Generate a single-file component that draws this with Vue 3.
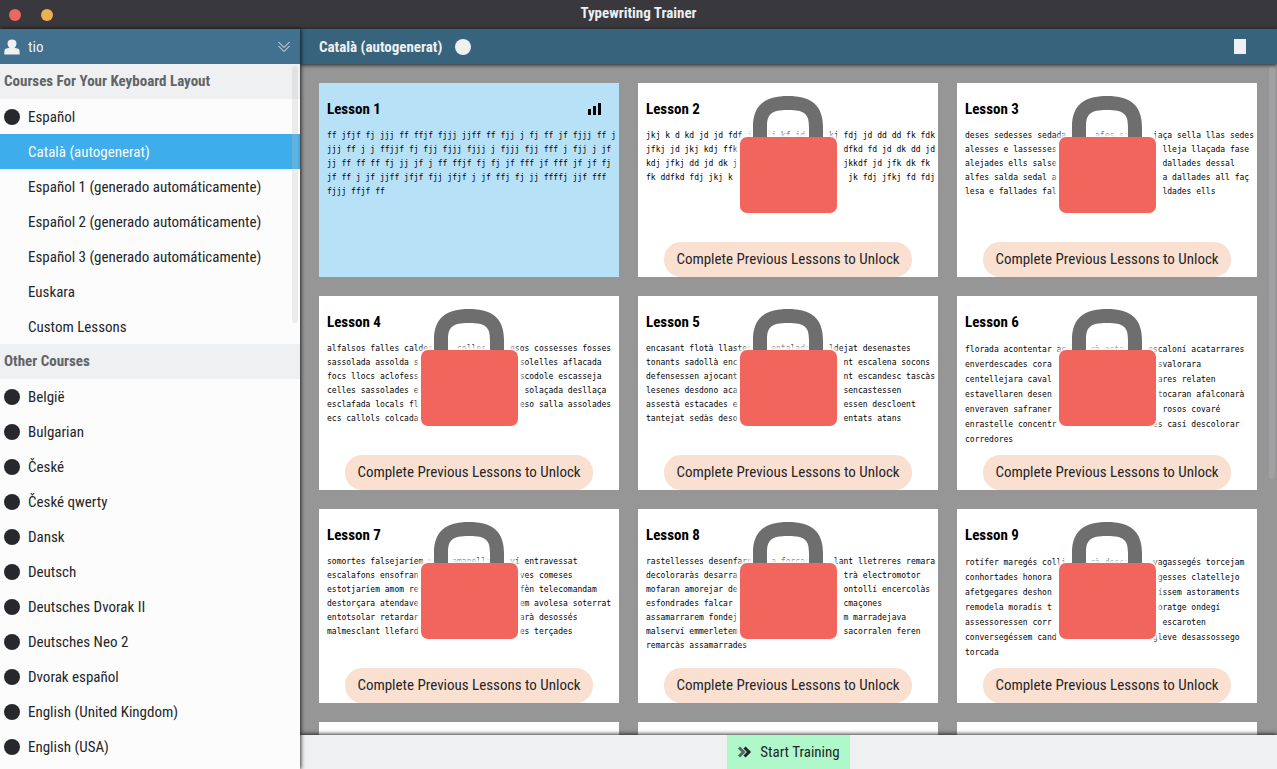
<script setup>
import { ref } from 'vue'

const keyboardCourses = [
  { name: 'Español', dot: true },
  { name: 'Català (autogenerat)' },
  { name: 'Español 1 (generado automáticamente)' },
  { name: 'Español 2 (generado automáticamente)' },
  { name: 'Español 3 (generado automáticamente)' },
  { name: 'Euskara' },
  { name: 'Custom Lessons' },
]
const otherCourses = [
  'België', 'Bulgarian', 'České', 'České qwerty', 'Dansk', 'Deutsch',
  'Deutsches Dvorak II', 'Deutsches Neo 2', 'Dvorak español',
  'English (United Kingdom)', 'English (USA)',
]
const selected = ref('Català (autogenerat)')

// A row is a list of [column, text] pieces placed on the monospace grid.
const row = (...pieces) =>
  pieces.reduce((line, [col, text]) => line.padEnd(col) + text, '')
const split = (left, col, right) => row([0, left], [col, right])

const lessons = [
  {
    title: 'Lesson 1',
    open: true,
    lines: [
      'ff jfjf fj jjj ff ffjf fjjj jjff ff fjj j fj ff jf fjjj ff j',
      'jjj ff j j ffjjf fj fjj fjjj fjjj j fjjj fjj fff j fjj j jf',
      'jj ff ff ff fj jj jf j ff ffjf fj fj jf fff jf fff jf jf fj',
      'jf ff j jf jjff jfjf fjj jfjf j jf ffj fj jj ffffj jjf fff',
      'fjjj ffjf ff',
    ],
  },
  {
    title: 'Lesson 2',
    lines: [
      'jkj k d kd jd jd fdf jk djj kf jd fdd kj fdj jd dd dd fk fdk',
      split('jfkj jd jkj kdj ffk', 41, 'dfkd fd jd dk dd jd'),
      split('kdj jfkj dd jd dk j', 41, 'jkkdf jd jfk dk fk'),
      split('fk ddfkd fdj jkj k', 42, 'jk fdj jfkj fd fdj'),
    ],
  },
  {
    title: 'Lesson 3',
    lines: [
      row([0, 'deses sedesses sedada'], [27, 'afes sa'], [39, 'jaça sella llas sedes']),
      split('alesses e lassesses', 41, 'lleja llaçada fase'),
      split('alejades ells salse', 41, 'dallades dessal'),
      split('alfes salda sedal a', 41, 'a dallades all faç'),
      split('lesa e fallades fal', 41, 'ldades ells'),
    ],
  },
  {
    title: 'Lesson 4',
    lines: [
      row([0, 'alfalsos falles caldes'], [27, 'colles'], [38, 'esos cossesses fosses']),
      split('sassolada assolda s', 40, 'solelles aflacada'),
      split('focs llocs aclofess', 40, 'scodole escasseja'),
      split('celles sassolades e', 41, 'solaçada desllaça'),
      split('esclafada locals fl', 40, 'eso salla assolades'),
      'ecs callols colcada',
    ],
  },
  {
    title: 'Lesson 5',
    lines: [
      row([0, 'encasant flotà llastes'], [26, 'entalada'], [38, 'ldejat desenastes']),
      split('tonants sadollà enc', 41, 'nt escalena socons'),
      split('defensessen ajocant', 41, 'nt escandesc tascàs'),
      split('lesenes desdono aca', 41, 'sencastessen'),
      split('assestà estacades e', 41, 'essen descloent'),
      split('tantejat sedàs deso', 41, 'entats atans'),
    ],
  },
  {
    title: 'Lesson 6',
    loose: true,
    lines: [
      row([0, 'florada acontentar ac'], [26, 'rà estar'], [38, 'escaloní acatarrares']),
      split('enverdescades cora', 40, 'svalorara'),
      split('centellejara caval', 40, 'ares relaten'),
      split('estavellaren desen', 40, 'tocaran afalconarà'),
      split('enveraven safraner', 41, 'rosos covaré'),
      split('enrastelle concentr', 39, 'es casí descolorar'),
      'corredores',
    ],
  },
  {
    title: 'Lesson 7',
    lines: [
      row([0, 'somortes falsejaríem v'], [26, 'amanella'], [38, 'ví entravessat']),
      split('escalafons ensofran', 40, 'ves comeses'),
      split('estotjaríem amom re', 40, 'fèn telecomandam'),
      split('destorçara atendave', 40, 'em avolesa soterrat'),
      split('entotsolar retardar', 40, 'arà desossés'),
      split('malmesclant llefard', 40, 'es terçades'),
    ],
  },
  {
    title: 'Lesson 8',
    lines: [
      row([0, 'rastellesses desenfarn'], [26, 'a forcar'], [39, 'lant lletreres remara']),
      split('decoloraràs desarra', 41, 'trà electromotor'),
      split('mofaran amorejar de', 41, 'ontollí encercolàs'),
      split('esfondrades falcar', 41, 'cmaçones'),
      split('assamarrarem fondej', 41, 'm marradejava'),
      split('malserví emmerletem', 41, 'sacorralen feren'),
      'remarcàs assamarrades',
    ],
  },
  {
    title: 'Lesson 9',
    loose: true,
    lines: [
      row([0, 'rotífer maregés colli'], [26, 'rà desca'], [39, 'vagassegés torcejam']),
      split('conhortades honora', 40, 'gesses clatellejo'),
      split('afetgegares deshon', 40, 'íssem astoraments'),
      split('remodela moradís t', 40, 'oratge ondegí'),
      split('assessoressen corr', 41, 'escaroten'),
      split('conversegéssem cand', 39, 'gleve desassossego'),
      'torcada',
    ],
  },
]
</script>

<template>
  <div class="window">
    <header class="titlebar">
      <div class="lights">
        <button class="light close" aria-label="Close"></button>
        <button class="light minimize" aria-label="Minimize"></button>
      </div>
      <h1 class="title">Typewriting Trainer</h1>
    </header>

    <div class="body">
      <aside class="sidebar">
        <button class="profile">
          <svg class="user-icon" viewBox="0 0 16 16" aria-hidden="true">
            <path d="M8 .5C5.300.5 3.500 2 3.500 4.600c0 1.900.8 3.200 1.900 4.100C4.500 9.300 2.800 9.200 1.700 9.800.6 10.400.3 11.500.3 15.500h15.400c0-4-.3-5.100-1.400-5.700-1.100-.6-2.800-.5-3.700-1.100 1.100-.9 1.900-2.200 1.900-4.100C12.500 2 10.700.5 8 .5z" />
          </svg>
          <span class="profile-name">tio</span>
          <svg class="chevrons" viewBox="0 0 12 12" aria-hidden="true">
            <path d="M.5 1 6 6.500 11.500 1M.5 5 6 10.500 11.500 5" />
          </svg>
        </button>

        <nav class="courses">
          <h2 class="section">Courses For Your Keyboard Layout</h2>
          <button
            v-for="c in keyboardCourses"
            :key="c.name"
            class="course"
            :class="{ active: c.name === selected }"
            @click="selected = c.name"
          >
            <span class="dot" :class="{ blank: !c.dot }"></span>{{ c.name }}
          </button>
          <h2 class="section">Other Courses</h2>
          <button v-for="name in otherCourses" :key="name" class="course" @click="selected = name">
            <span class="dot"></span>{{ name }}
          </button>
          <div class="scroll side-scroll"></div>
        </nav>
      </aside>

      <main class="main">
        <div class="toolbar">
          <h2 class="course-title">Català (autogenerat)</h2>
          <button class="tool-dot" aria-label="Course information"></button>
          <button class="tool-box" aria-label="Configure"></button>
        </div>

        <div class="lessons">
          <div class="grid">
            <article v-for="l in lessons" :key="l.title" class="card" :class="{ open: l.open }">
              <div class="card-head">
                <h3 class="card-title">{{ l.title }}</h3>
                <button v-if="l.open" class="stats" aria-label="Statistics">
                  <svg viewBox="0 0 14 12" aria-hidden="true">
                    <path d="M0 6h3v6H0zM5 3h3v9H5zM10 0h3v12h-3z" />
                  </svg>
                </button>
              </div>
              <pre class="sample" :class="{ loose: l.loose }">{{ l.lines.join('\n') }}</pre>
              <template v-if="!l.open">
                <svg class="lock" viewBox="0 0 98 118" aria-hidden="true">
                  <path class="shackle" d="M14 42V32C14 10 26 1 49 1s35 9 35 31v10H70V32C70 19 66 15 49 15S28 19 28 32v10z" />
                  <rect class="lock-body" x="1" y="42" width="97" height="76" rx="7" />
                </svg>
                <p class="unlock">Complete Previous Lessons to Unlock</p>
              </template>
            </article>
            <article v-for="n in 3" :key="n" class="card"></article>
          </div>
          <div class="scroll main-scroll"></div>
        </div>

        <footer class="footer">
          <button class="start">
            <svg class="start-icon" viewBox="0 0 14 12" aria-hidden="true">
              <path class="back" d="M1.500 1.500 6 6l-4.500 4.500" />
              <path class="front" d="M7 1.500 11.500 6 7 10.500" />
            </svg>
            Start Training
          </button>
        </footer>
      </main>
    </div>
  </div>
</template>

<style>
body {
  margin: 0;
}
</style>

<style scoped>
.window {
  display: flex;
  flex-direction: column;
  height: 100vh;
  overflow: hidden;
  font-family: "Ubuntu Condensed", "Roboto Condensed", "Roboto", sans-serif;
  font-size: 15px;
  color: #232629;
  background: #969696;
}
h1, h2, h3, p, pre {
  margin: 0;
}
h1, h2, h3 {
  font-size: 15px;
  font-weight: 700;
}
button {
  border: 0;
  padding: 0;
  background: none;
  font: inherit;
  color: inherit;
}
.titlebar {
  position: relative;
  display: flex;
  align-items: center;
  justify-content: center;
  flex: none;
  height: 29px;
  background: #38383d;
}
.lights {
  position: absolute;
  left: 9px;
  display: flex;
  gap: 20px;
}
.light {
  width: 12px;
  height: 12px;
  border-radius: 50%;
}
.close {
  background: #ee6661;
}
.minimize {
  background: #edb052;
}
.title {
  line-height: 26px;
  padding-bottom: 3px;
  color: #eceef0;
}
.body {
  display: flex;
  flex: 1;
  min-height: 0;
}
.sidebar {
  position: relative;
  z-index: 2;
  display: flex;
  flex-direction: column;
  flex: none;
  width: 300px;
  background: #fcfcfc;
  box-shadow: 1px 0 4px rgba(0, 0, 0, 0.8);
}
.profile {
  display: flex;
  align-items: center;
  flex: none;
  gap: 8px;
  height: 35px;
  padding: 0 10px 0 4px;
  background: #42718f;
  color: #eff0f1;
  text-align: left;
}
.user-icon {
  width: 16px;
  height: 16px;
  fill: #eff0f1;
}
.profile-name {
  flex: 1;
}
.chevrons {
  width: 12px;
  height: 12px;
  fill: none;
  stroke: #eff0f1;
}
.courses {
  position: relative;
  flex: 1;
  min-height: 0;
  overflow: hidden;
}
.section {
  padding-left: 4px;
  line-height: 35px;
  color: #616467;
  background: #eff0f2;
}
.course {
  display: flex;
  align-items: center;
  gap: 8px;
  width: 100%;
  height: 35px;
  padding-left: 4px;
  text-align: left;
}
.course.active {
  background: #3daeeb;
  color: #fcfcfc;
}
.dot {
  width: 16px;
  height: 16px;
  border-radius: 50%;
  background: #26282b;
}
.dot.blank {
  background: none;
}
.scroll {
  position: absolute;
  top: 2px;
  right: 2px;
  width: 6px;
  border-radius: 3px;
}
.side-scroll {
  height: 257px;
  background: rgba(190, 190, 190, 0.28);
}
.main {
  display: flex;
  flex-direction: column;
  flex: 1;
  min-width: 0;
}
.toolbar {
  position: relative;
  z-index: 1;
  display: flex;
  align-items: center;
  flex: none;
  height: 35px;
  padding: 0 31px 0 19px;
  background: #38637d;
  color: #eff0f1;
  box-shadow: 0 1px 4px rgba(0, 0, 0, 0.8);
}
.tool-dot {
  width: 16px;
  height: 16px;
  margin-left: 13px;
  border-radius: 50%;
  background: #eff0f1;
}
.tool-box {
  width: 12px;
  height: 15px;
  margin-left: auto;
  background: #eff0f1;
}
.lessons {
  position: relative;
  flex: 1;
  min-height: 0;
  overflow: hidden;
}
.grid {
  display: grid;
  grid-template-columns: repeat(3, minmax(0, 1fr));
  gap: 19px;
  padding: 19px 20px 19px 19px;
}
.card {
  position: relative;
  display: flex;
  flex-direction: column;
  box-sizing: border-box;
  min-height: 194px;
  padding: 13px 8px 0;
  background: #fff;
}
.card.open {
  background: #b7e1f7;
}
.card-head {
  display: flex;
  align-items: center;
  justify-content: space-between;
  height: 25px;
  padding-right: 9px;
}
.card-title {
  color: #000;
}
.stats svg {
  display: block;
  width: 14px;
  height: 12px;
}
.sample {
  flex: 1;
  margin-top: 8px;
  font-family: "DejaVu Sans Mono", monospace;
  font-size: 8px;
  line-height: 14px;
  color: #000;
}
.sample.loose {
  line-height: 15px;
}
.lock {
  position: absolute;
  top: 12px;
  left: 50%;
  width: 98px;
  height: 118px;
  margin-left: -49px;
  overflow: visible;
  filter: drop-shadow(0 0 2px #fff) drop-shadow(0 0 3px #fff) drop-shadow(0 0 3px #fff);
}
.shackle {
  fill: #6e6e6e;
}
.lock-body {
  fill: #f2655c;
}
.unlock {
  align-self: center;
  padding: 0 12px;
  line-height: 35px;
  border-radius: 17px;
  background: #fae0d1;
}
.main-scroll {
  height: 413px;
  background: #a1a1a4;
}
.footer {
  position: relative;
  z-index: 1;
  display: flex;
  justify-content: center;
  flex: none;
  height: 34px;
  background: #eff0f2;
  box-shadow: 0 -1px 4px rgba(0, 0, 0, 0.8);
}
.start {
  display: flex;
  align-items: center;
  gap: 8px;
  padding: 0 10px;
  background: #aff8ca;
}
.start-icon {
  width: 15px;
  height: 12px;
  fill: none;
  stroke-width: 3;
}
.back {
  stroke: #55675f;
}
.front {
  stroke: #232629;
}
</style>
